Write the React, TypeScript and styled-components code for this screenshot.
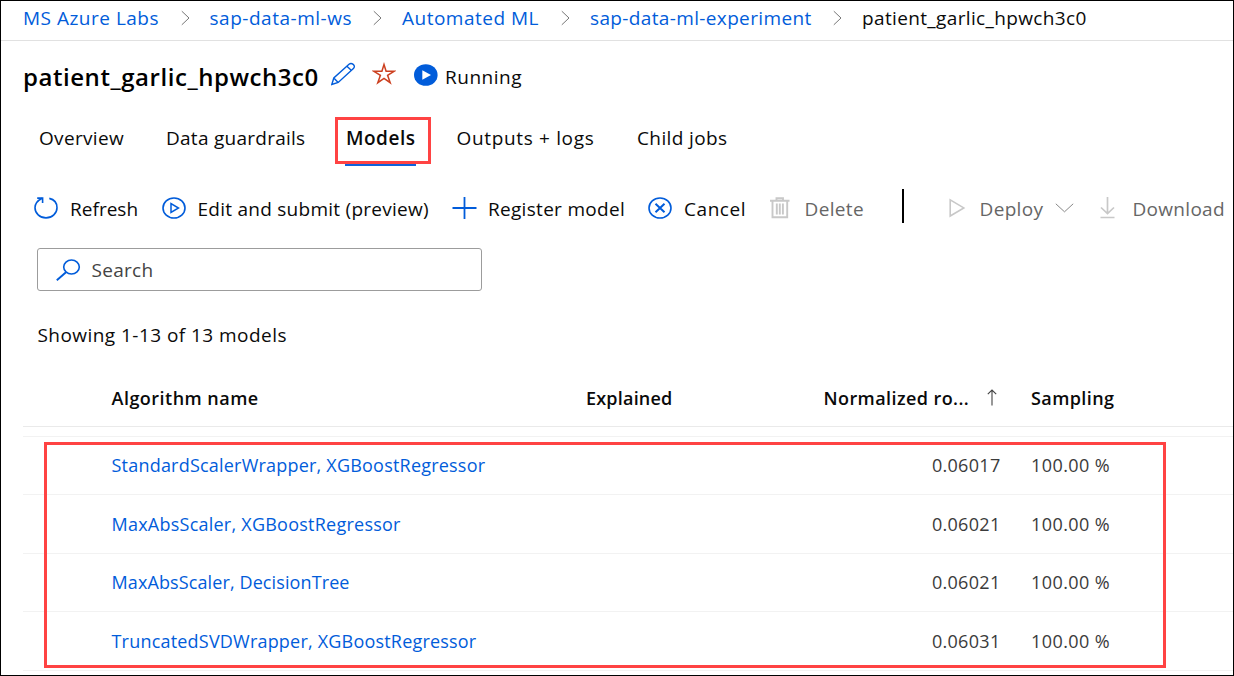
import React from 'react';
import styled, { createGlobalStyle, css } from 'styled-components';

const color = {
  link: '#015cda',
  text: '#0a0a0a',
  value: '#3b3b3b',
  muted: '#666666',
  disabled: '#c8c8c8',
  highlight: '#ff4343',
};

const GlobalStyle = createGlobalStyle`
  * { box-sizing: border-box; }
  body {
    margin: 0;
    background: #fff;
    font-family: 'Open Sans', 'Noto Sans', sans-serif;
  }
`;

const Frame = styled.main`
  position: relative;
  width: 1234px;
  height: 676px;
  overflow: hidden;
  background: #fff;
  border: 1px solid #000;
`;

const bar = css`
  display: grid;
  align-items: center;
`;

const Breadcrumb = styled.nav`
  ${bar}
  grid-template-columns: 158px 28.5px 163.5px 29px 159px 29px 243px 29px 1fr;
  height: 40px;
  padding: 0 0 5px 22px;
  border-bottom: 1px solid #e1e1e1;
`;

const TitleBar = styled.header`
  ${bar}
  grid-template-columns: 308px 41px 41.5px 31.5px 1fr;
  height: 68px;
  padding-left: 22px;
`;

const TabBar = styled.div`
  ${bar}
  grid-template-columns: 127px 180px 110.5px 180.5px 1fr;
  height: 57px;
  padding-left: 38px;
`;

const Toolbar = styled.div`
  ${bar}
  grid-template-columns: 36px 92px 35.5px 254.5px 36px 160px 36px 85px 35.5px 97.5px 47px 30.5px 75.5px 45px 32.5px 1fr;
  height: 80px;
  padding: 6px 0 0 33px;
`;

const Label = styled.span<{ $track?: number; $tone?: string; $strong?: boolean; $size?: number; $drop?: number }>`
  display: block;
  font-size: ${(p) => p.$size ?? 19}px;
  line-height: 26px;
  font-weight: ${(p) => (p.$strong ? 570 : 400)};
  letter-spacing: ${(p) => p.$track ?? 0}px;
  color: ${(p) => p.$tone ?? color.text};
  padding-top: ${(p) => p.$drop ?? 0}px;
  white-space: nowrap;
`;

const Title = styled.h1`
  margin: 0;
  padding-top: 4px;
  font-size: 24px;
  line-height: 32px;
  font-weight: 600;
  letter-spacing: 0.55px;
  color: #000;
  white-space: nowrap;
`;

const Tab = styled.div<{ $active?: boolean }>`
  display: flex;
  align-items: center;
  height: 57px;
  position: relative;
  ${(p) =>
    p.$active &&
    css`
      &::before {
        content: '';
        position: absolute;
        left: -1px;
        bottom: 0;
        width: 71px;
        height: 4px;
        background: #0f62dc;
      }
    `}
`;

const TabHighlight = styled.div`
  position: absolute;
  left: -11px;
  top: 8px;
  width: 96px;
  height: 47px;
  border: 3px solid ${color.highlight};
`;

const Separator = styled.div`
  width: 2px;
  height: 34px;
  margin-top: -6px;
  background: #000;
`;

const SearchBox = styled.div`
  display: flex;
  align-items: center;
  gap: 11px;
  width: 445px;
  height: 43px;
  margin: 2px 0 0 36px;
  padding-left: 17.5px;
  border: 1px solid #9c9c9c;
  border-radius: 3px;
`;

const Summary = styled.div`
  display: flex;
  align-items: center;
  height: 86px;
  padding: 2px 0 0 36.5px;
`;

const row = css`
  display: grid;
  grid-template-columns: 474.5px 237.5px 177px 30.5px 1fr;
  align-items: center;
  padding-left: 88.5px;
`;

const Table = styled.section`
  margin-left: 22px;
`;

const HeadRow = styled.div`
  ${row}
  height: 50px;
  padding-bottom: 8px;
  border-bottom: 1px solid #eaeaea;
`;

const SortCell = styled.div`
  display: flex;
  align-items: center;
  justify-content: space-between;
  padding-right: 4px;
`;

const Body = styled.div`
  margin-top: 9px;
  border-top: 1px solid #f2f2f2;
`;

const Row = styled.div`
  ${row}
  height: 59px;
  border-bottom: 1px solid #f2f2f2;
  &:nth-child(odd) {
    height: 58px;
    padding-bottom: 1px;
  }
`;

const Value = styled(Label)`
  justify-self: end;
`;

const TableHighlight = styled.div`
  position: absolute;
  left: 43px;
  top: 441px;
  width: 1122px;
  height: 226px;
  border: 3px solid ${color.highlight};
`;

const Icon = styled.svg<{ $tone?: string; $lift?: number }>`
  display: block;
  flex: none;
  fill: none;
  stroke: ${(p) => p.$tone ?? color.link};
  stroke-width: 1.6;
  margin-top: ${(p) => -(p.$lift ?? 0)}px;
`;

const Chevron = () => (
  <Icon width="10" height="16" viewBox="0 0 10 16" $tone="#777">
    <path d="M.8 1.2 8 8 .8 14.8" strokeWidth="1" />
  </Icon>
);

const PencilIcon = () => (
  <Icon width="25" height="24" viewBox="0 0 25 24" $lift={2}>
    <path d="M.8 22.5 2.800 16 18 2.300Q20 .7 22.200 2.400T22.400 6.600L7.200 20.400ZM2.800 16 7.200 20.400M15.900 4.200 20.500 8.400" strokeWidth="1.4" />
  </Icon>
);

const StarIcon = () => (
  <Icon width="24" height="24" viewBox="0 0 24 24" $tone="#cc4020" $lift={2}>
    <path d="M12 2.500 14.100 9.300H22L15.600 13.300 18.200 20.700 12 16.300 5.800 20.700 8.400 13.300 2 9.300H9.900Z" strokeWidth="1.5" />
  </Icon>
);

const RunningIcon = () => (
  <Icon width="24" height="22" viewBox="0 0 24 22" $tone="none">
    <ellipse cx="11.8" cy="11" rx="11.800" ry="10.800" fill={color.link} />
    <path d="M8.300 6.200v9.600L17 11z" fill="#fff" />
  </Icon>
);

const RefreshIcon = () => (
  <Icon width="24" height="22" viewBox="0 0 24 22" $lift={2}>
    <path d="M15.300 1.400C20 2.500 23 6.200 23 10.700 23 16.300 18.200 20.900 12 20.900S1 16.300 1 10.700C1 6.800 3.900 3.300 8.300 1.200" />
    <path d="M3.200 1.100H8.600V6" />
  </Icon>
);

const SubmitIcon = () => (
  <Icon width="24" height="22" viewBox="0 0 24 22" $lift={2}>
    <ellipse cx="12" cy="11" rx="11" ry="10" />
    <path d="M9 6.500v9L16.500 11z" strokeWidth="1.500" />
  </Icon>
);

const PlusIcon = () => (
  <Icon width="25" height="22" viewBox="0 0 25 22" $lift={2}>
    <path d="M12.500 0v22M.5 11h24" strokeWidth="1.8" />
  </Icon>
);

const CancelIcon = () => (
  <Icon width="24" height="22" viewBox="0 0 24 22" $lift={2}>
    <ellipse cx="12" cy="11" rx="11" ry="10" />
    <path d="M7.500 6.800 16.500 15.200M16.500 6.800 7.500 15.200" strokeWidth="2" />
  </Icon>
);

const TrashIcon = () => (
  <Icon width="22" height="22" viewBox="0 0 22 22" $tone={color.disabled} $lift={2}>
    <path d="M1 3.800H20.500M7.500 3.500V1.200H14V3.500M3.500 4V20.200H18.200V4M7.800 6.500V17.500M10.800 6.500V17.500M13.900 6.500V17.500" strokeWidth="1.900" />
  </Icon>
);

const DeployIcon = () => (
  <Icon width="17" height="20" viewBox="0 0 17 20" $tone={color.disabled} $lift={2}>
    <path d="M1.200 1.800V18L14.800 9.900Z" strokeWidth="1.600" />
  </Icon>
);

const ChevronDown = () => (
  <Icon width="19" height="10" viewBox="0 0 19 10" $tone="#888" $lift={3}>
    <path d="M.8.8 9.500 8.800 18.200.8" strokeWidth="1" />
  </Icon>
);

const DownloadIcon = () => (
  <Icon width="16" height="22" viewBox="0 0 16 22" $tone={color.disabled} $lift={2}>
    <path d="M7.500 0V16.500M1 10.500 7.500 16.500 14 10.500M.5 20.500H14.500" strokeWidth="1.700" />
  </Icon>
);

const SearchIcon = () => (
  <Icon width="25" height="22" viewBox="0 0 25 22">
    <ellipse cx="15.500" cy="8" rx="7.800" ry="7" />
    <path d="M10 13.200 .8 21.300" strokeWidth="1.900" />
  </Icon>
);

const SortArrow = () => (
  <Icon width="10" height="17" viewBox="0 0 10 17" $tone="#444">
    <path d="M5 16.500V1M.8 5.200 5 1 9.200 5.200" strokeWidth="1.100" />
  </Icon>
);

const models = [
  { name: 'StandardScalerWrapper, XGBoostRegressor', track: 0.21, score: '0.06017' },
  { name: 'MaxAbsScaler, XGBoostRegressor', track: 0.24, score: '0.06021' },
  { name: 'MaxAbsScaler, DecisionTree', track: 0.11, score: '0.06021' },
  { name: 'TruncatedSVDWrapper, XGBoostRegressor', track: 0.2, score: '0.06031' },
];

export default function App() {
  return (
    <>
      <GlobalStyle />
      <Frame>
        <Breadcrumb>
          <Label $tone={color.link} $track={0.5}>MS Azure Labs</Label>
          <Chevron />
          <Label $tone={color.link} $track={0.52}>sap-data-ml-ws</Label>
          <Chevron />
          <Label $tone={color.link} $track={0.49}>Automated ML</Label>
          <Chevron />
          <Label $tone={color.link} $track={0.36}>sap-data-ml-experiment</Label>
          <Chevron />
          <Label $track={0.36}>patient_garlic_hpwch3c0</Label>
        </Breadcrumb>

        <TitleBar>
          <Title>patient_garlic_hpwch3c0</Title>
          <PencilIcon />
          <StarIcon />
          <RunningIcon />
          <Label $track={0.5} $drop={3}>Running</Label>
        </TitleBar>

        <TabBar>
          <Tab><Label $track={0.33}>Overview</Label></Tab>
          <Tab><Label $track={0.26}>Data guardrails</Label></Tab>
          <Tab $active>
            <Label $strong $track={0.5}>Models</Label>
            <TabHighlight />
          </Tab>
          <Tab><Label $track={0.66}>Outputs + logs</Label></Tab>
          <Tab><Label $track={0.38}>Child jobs</Label></Tab>
        </TabBar>

        <Toolbar>
          <RefreshIcon />
          <Label $track={0.03}>Refresh</Label>
          <SubmitIcon />
          <Label $track={0.26}>Edit and submit (preview)</Label>
          <PlusIcon />
          <Label $track={0.3}>Register model</Label>
          <CancelIcon />
          <Label $track={0.55}>Cancel</Label>
          <TrashIcon />
          <Label $tone={color.muted} $track={0.36}>Delete</Label>
          <Separator />
          <DeployIcon />
          <Label $tone={color.muted} $track={0.34}>Deploy</Label>
          <ChevronDown />
          <DownloadIcon />
          <Label $tone={color.muted} $track={0.3}>Download</Label>
        </Toolbar>

        <SearchBox>
          <SearchIcon />
          <Label $tone="#444" $track={0.3}>Search</Label>
        </SearchBox>

        <Summary>
          <Label $track={0.45}>Showing 1-13 of 13 models</Label>
        </Summary>

        <Table>
          <HeadRow>
            <Label $strong $size={18} $track={0.48}>Algorithm name</Label>
            <Label $strong $size={18} $track={0.2}>Explained</Label>
            <SortCell>
              <Label $strong $size={18} $track={0.42}>Normalized ro...</Label>
              <SortArrow />
            </SortCell>
            <span />
            <Label $strong $size={18} $track={0.4}>Sampling</Label>
          </HeadRow>
          <Body>
            {models.map((m) => (
              <Row key={m.name}>
                <Label $size={18} $tone={color.link} $track={m.track}>{m.name}</Label>
                <span />
                <Value $size={18} $tone={color.value} $track={0.3}>{m.score}</Value>
                <span />
                <Label $size={18} $tone={color.value} $track={0.42}>100.00 %</Label>
              </Row>
            ))}
          </Body>
        </Table>
        <TableHighlight />
      </Frame>
    </>
  );
}
